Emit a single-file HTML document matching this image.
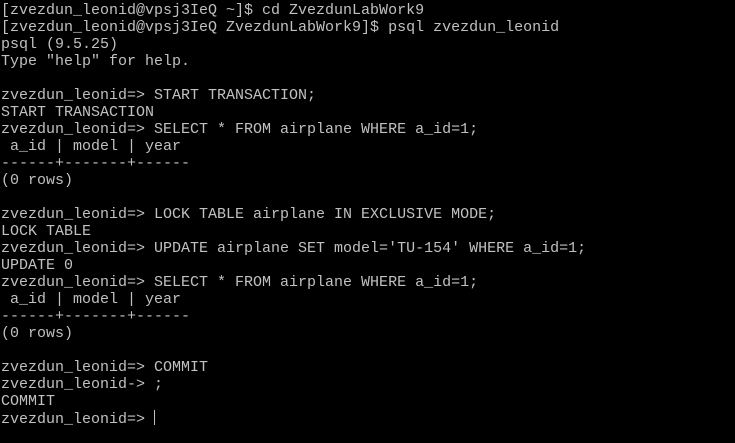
<html><head><style>
body{margin:0;background:#000;width:735px;height:443px;overflow:hidden}
pre{margin:0;padding:2px 0 0 1px;font-family:"Liberation Mono",monospace;font-size:15px;line-height:17px;color:#c0c0c0}
.c{display:inline-block;width:1px;height:15px;background:#c0c0c0;vertical-align:-2px}
</style></head><body><pre>[zvezdun_leonid@vpsj3IeQ ~]$ cd ZvezdunLabWork9
[zvezdun_leonid@vpsj3IeQ ZvezdunLabWork9]$ psql zvezdun_leonid
psql (9.5.25)
Type "help" for help.

zvezdun_leonid=&gt; START TRANSACTION;
START TRANSACTION
zvezdun_leonid=&gt; SELECT * FROM airplane WHERE a_id=1;
 a_id | model | year
------+-------+------
(0 rows)

zvezdun_leonid=&gt; LOCK TABLE airplane IN EXCLUSIVE MODE;
LOCK TABLE
zvezdun_leonid=&gt; UPDATE airplane SET model='TU-154' WHERE a_id=1;
UPDATE 0
zvezdun_leonid=&gt; SELECT * FROM airplane WHERE a_id=1;
 a_id | model | year
------+-------+------
(0 rows)

zvezdun_leonid=&gt; COMMIT
zvezdun_leonid-&gt; ;
COMMIT
zvezdun_leonid=&gt; <span class="c"></span></pre></body></html>
